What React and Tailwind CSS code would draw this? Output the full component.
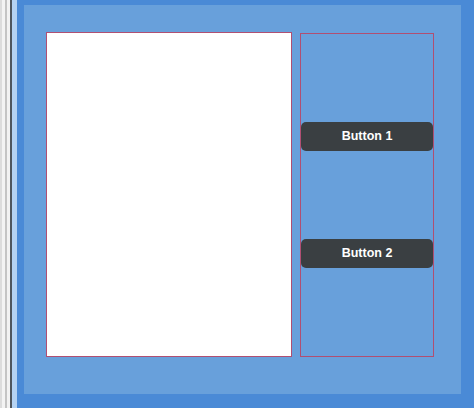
import React from 'react';

const ActionButton = ({ label }) => (
  <button
    type="button"
    className="h-[29px] w-full rounded-[5px] bg-[#3a3f42] text-[12.5px] font-bold text-white"
    style={{ fontFamily: '"Liberation Sans", Arial, sans-serif' }}
  >
    {label}
  </button>
);

const App = () => {
  return (
    <div
      className="flex h-[408px] w-[474px] overflow-hidden bg-[#4a8ad6]"
      style={{ fontFamily: '"Noto Sans", "Open Sans", sans-serif' }}
    >
      {/* window edge strip */}
      <div className="flex h-full shrink-0">
        <div className="w-[2px] bg-[#dcdcdc]" />
        <div className="w-[3px] bg-[#f3f3f3]" />
        <div className="w-[2px] bg-[#c4c4c4]" />
        <div className="w-[3px] bg-[#f2f2f2]" />
        <div className="w-[2px] bg-[#4e565e]" />
        <div className="w-[5px] bg-[#b4d2f2]" />
      </div>

      <div className="flex flex-1 pb-[14px] pl-[7px] pr-[13px] pt-[5px]">
        <div className="flex flex-1 items-start gap-[8px] bg-[#68a0db] pl-[22px] pt-[27px]">
          <div className="h-[325px] w-[246px] border border-[#b04f72] bg-white" />
          <div className="mt-[1px] flex h-[324px] w-[134px] flex-col gap-[88px] border border-[#b04f72] pt-[88px]">
            <ActionButton label="Button 1" />
            <ActionButton label="Button 2" />
          </div>
        </div>
      </div>
    </div>
  );
};

export default App;
